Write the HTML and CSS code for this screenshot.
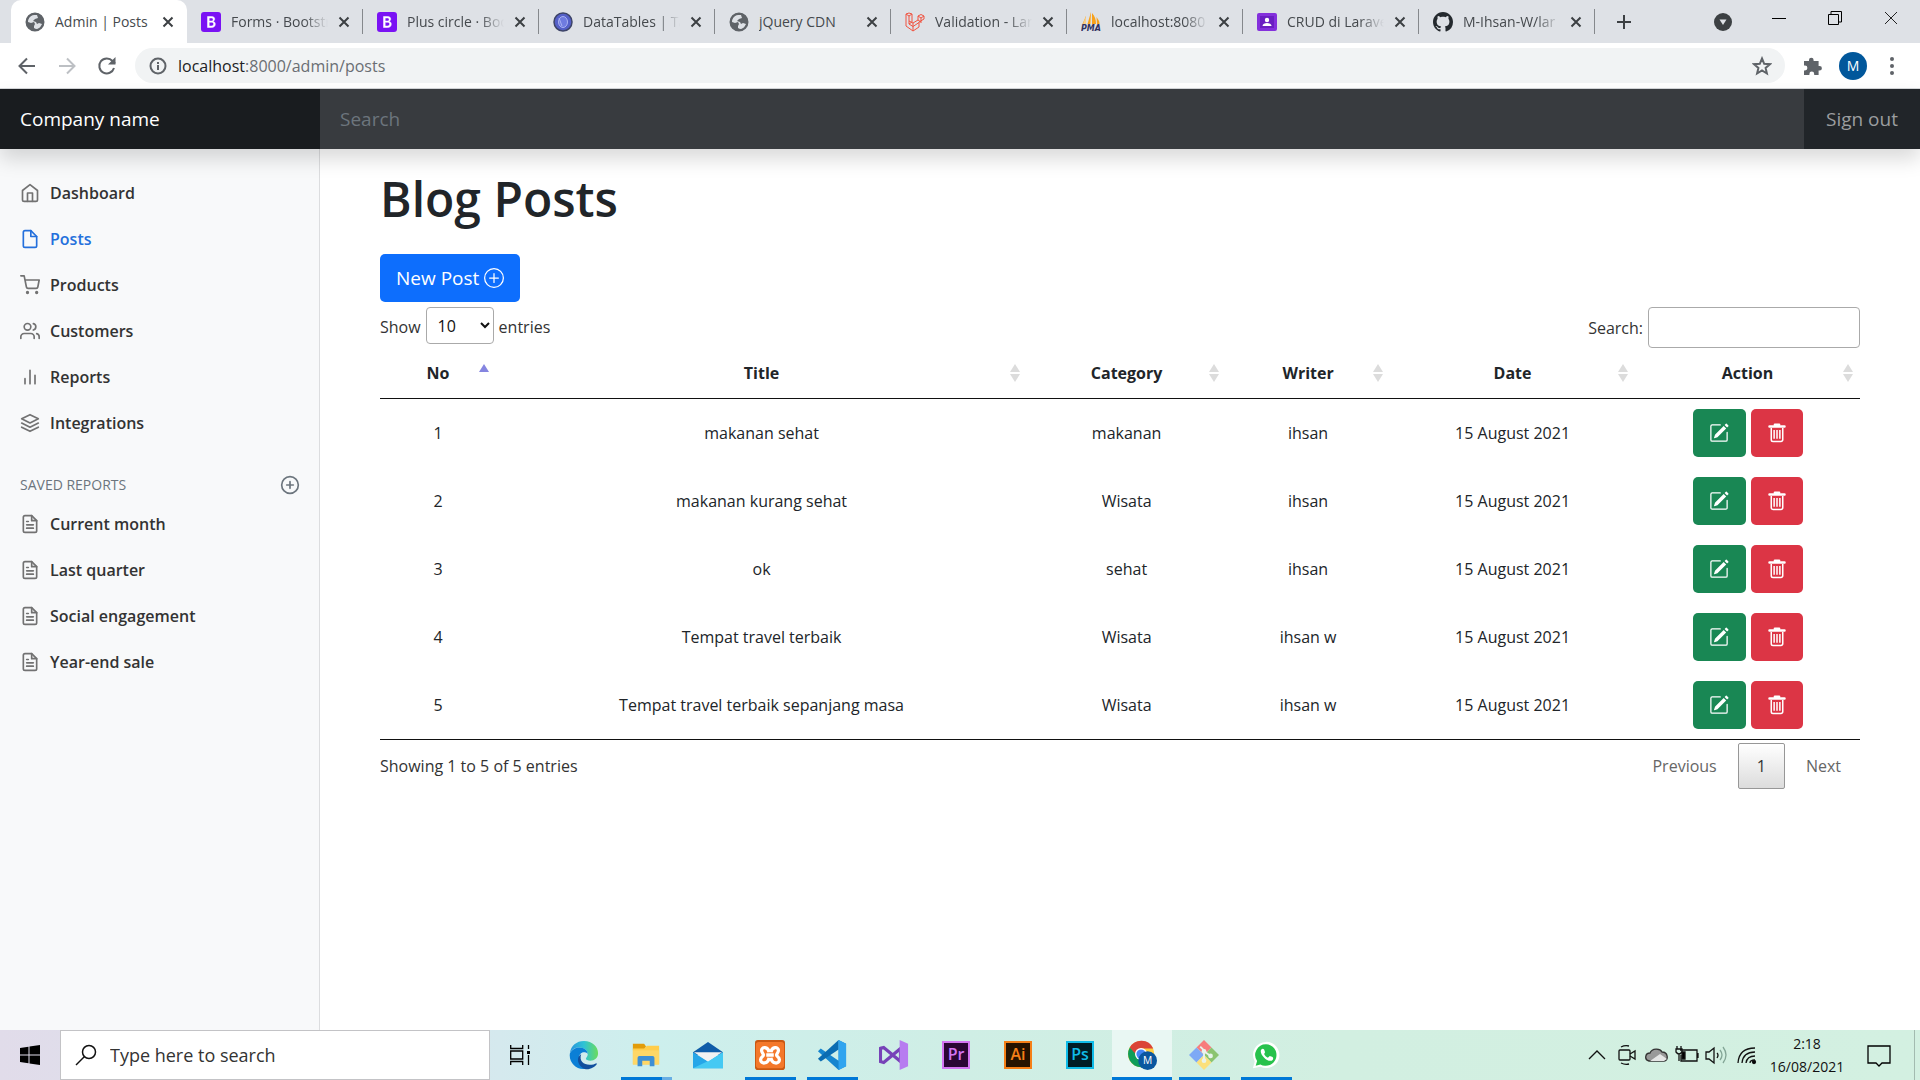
FILE: index.html
```html
<!DOCTYPE html>
<html lang="en">
<head>
<meta charset="utf-8">
<meta name="viewport" content="width=device-width, initial-scale=1">
<title>Admin | Posts</title>
<link rel="stylesheet" href="styles.css">
</head>
<body>
<svg class="sprite" aria-hidden="true">
  <symbol id="globe" viewBox="0 0 20 20"><circle cx="10" cy="10" r="9" fill="#5f6368"/><path d="M9 3c-3 0-6 3-6 7l3 1 3-1 1 2-1 2v2l2 1c3 0 5-2 6-5l-3-1-2 1-1-2-3-1 2-2 3-1-1-3z" fill="#dee1e6"/><path d="M10 1.500a8.500 8.500 0 1 0 0 17a8.500 8.500 0 1 0 0-17" fill="none" stroke="#5f6368" stroke-width="2"/></symbol>
  <symbol id="boot" viewBox="0 0 20 20"><rect width="20" height="20" rx="3" fill="#7a12f4"/><path d="M6.500 4.500h4.200c1.900 0 3 .9 3 2.500 0 1.200-.7 2.100-1.800 2.400 1.500.2 2.400 1.200 2.400 2.700 0 2.100-1.400 3.400-3.700 3.400H6.500zM8.200 6v3h2c1.200 0 1.900-.5 1.900-1.500S11.500 6 10.400 6zm0 4.300V14h2.300c1.300 0 2.100-.6 2.100-1.900 0-1.200-.8-1.800-2.200-1.800z" fill="#fff" stroke="#fff" stroke-width=".5"/></symbol>
  <symbol id="x" viewBox="0 0 12 12"><path d="M1.500 1.500l9 9M10.500 1.500l-9 9" stroke="#3c4043" stroke-width="2" fill="none"/></symbol>
  <symbol id="file" viewBox="0 0 24 24"><path d="M13 2H6a2 2 0 0 0-2 2v16a2 2 0 0 0 2 2h12a2 2 0 0 0 2-2V9z"/><path d="M13 2v7h7"/></symbol>
  <symbol id="filetext" viewBox="0 0 24 24"><path d="M14 2H6a2 2 0 0 0-2 2v16a2 2 0 0 0 2 2h12a2 2 0 0 0 2-2V8z"/><path d="M14 2v6h6M16 13H8M16 17H8M10 9H8"/></symbol>
  <symbol id="pluscircle" viewBox="0 0 24 24"><circle cx="12" cy="12" r="10"/><path d="M12 8v8M8 12h8"/></symbol>
  <symbol id="sort" viewBox="0 0 10 18"><path d="M5 0l5 8H0zM5 18l5-8H0z" fill="#dcdcdc"/></symbol>
  <symbol id="edit" viewBox="0 0 16 16"><path fill="#fff" d="M15.502 1.940a.5.5 0 0 1 0 .706L14.459 3.690l-2-2L13.502.646a.5.5 0 0 1 .707 0l1.293 1.293zm-1.750 2.456-2-2L4.939 9.210a.5.5 0 0 0-.121.196l-.805 2.414a.25.25 0 0 0 .316.316l2.414-.805a.5.5 0 0 0 .196-.120l6.813-6.814z"/><path fill="#fff" fill-rule="evenodd" d="M1 13.500A1.500 1.500 0 0 0 2.500 15h11a1.500 1.500 0 0 0 1.500-1.500v-6a.5.5 0 0 0-1 0v6a.5.5 0 0 1-.5.5h-11a.5.5 0 0 1-.5-.5v-11a.5.5 0 0 1 .5-.5H9a.5.5 0 0 0 0-1H2.500A1.500 1.500 0 0 0 1 2.500v11z"/></symbol>
  <symbol id="trash" viewBox="0 0 16 16"><path d="M2 2.800h12M6.300 1.400h3.400" stroke="#fff" stroke-width="2" stroke-linecap="round" fill="none"/><path d="M3.400 4v9.300a1.400 1.400 0 0 0 1.400 1.400h6.400a1.400 1.400 0 0 0 1.400-1.400V4M5.700 5.500v7M8 5.500v7M10.300 5.500v7" stroke="#fff" stroke-width="1.200" fill="none"/></symbol>
</svg>

<header class="browser">
  <div class="tabstrip">
    <nav class="tabs" aria-label="Tabs">
      <div class="tab active"><svg class="fav"><use href="#globe"/></svg><span class="name">Admin | Posts</span><button class="close" aria-label="Close tab"><svg><use href="#x"/></svg></button></div>
      <div class="tab"><svg class="fav"><use href="#boot"/></svg><span class="name">Forms · Bootstr</span><button class="close" aria-label="Close tab"><svg><use href="#x"/></svg></button></div>
      <div class="tab"><svg class="fav"><use href="#boot"/></svg><span class="name">Plus circle · Boo</span><button class="close" aria-label="Close tab"><svg><use href="#x"/></svg></button></div>
      <div class="tab"><svg class="fav" viewBox="0 0 20 20"><circle cx="10" cy="10" r="9" fill="#5560c8" stroke="#3d4468" stroke-width="1.500"/><ellipse cx="10" cy="10" rx="4.500" ry="5.500" fill="#6f7be0" stroke="#a9b2f2"/><path d="M6 6l3 8" stroke="#a9b2f2" fill="none"/></svg><span class="name">DataTables | Ta</span><button class="close" aria-label="Close tab"><svg><use href="#x"/></svg></button></div>
      <div class="tab"><svg class="fav"><use href="#globe"/></svg><span class="name full">jQuery CDN</span><button class="close" aria-label="Close tab"><svg><use href="#x"/></svg></button></div>
      <div class="tab"><svg class="fav" viewBox="0 0 20 20" fill="none" stroke="#f05340" stroke-linejoin="round"><path d="M1 2l3-1 3 1-3 2zM1 2v12l7 5 6-4v-5l5-3V4l-3-1.500L13 4v4l-5 3V19M7 2v8l-3 2V4M4 12l4 2.500 6-4M13 4l3 2 3-2M16 6v5M13 8l3 2M8 11L4 9"/></svg><span class="name">Validation - Lar</span><button class="close" aria-label="Close tab"><svg><use href="#x"/></svg></button></div>
      <div class="tab"><svg class="fav" viewBox="0 0 20 20"><path d="M5 4v8H1.500zM10 0v12H6.500zM11 1c3 3 4 7 4 11h-4zM15.500 5c2 3 3 4 3 7h-2.500z" fill="#f7a11b"/><path d="M5 4v8H2zM10 1v11H9z" fill="#f9cf8a"/><text x="0" y="19" class="pma">PMA</text></svg><span class="name">localhost:8080</span><button class="close" aria-label="Close tab"><svg><use href="#x"/></svg></button></div>
      <div class="tab"><svg class="fav" viewBox="0 0 20 20"><rect y="1" width="20" height="18" rx="2" fill="#8430dc"/><rect x="3" y="4" width="14" height="12" fill="#6a1fc2"/><circle cx="10" cy="8" r="2.200" fill="#fff"/><path d="M5.500 14c0-4 9-4 9 0z" fill="#fff"/></svg><span class="name">CRUD di Larave</span><button class="close" aria-label="Close tab"><svg><use href="#x"/></svg></button></div>
      <div class="tab"><svg class="fav" viewBox="0 0 16 16"><path fill="#24292e" d="M8 0C3.580 0 0 3.580 0 8c0 3.540 2.290 6.530 5.470 7.590.4.070.55-.17.55-.38 0-.19-.01-.82-.01-1.490-2.010.37-2.530-.49-2.690-.94-.09-.23-.48-.94-.82-1.130-.28-.15-.68-.52-.01-.53.63-.01 1.080.58 1.230.82.72 1.210 1.870.87 2.330.66.07-.52.28-.87.51-1.070-1.780-.2-3.640-.89-3.640-3.950 0-.87.31-1.590.82-2.150-.08-.2-.36-1.020.08-2.120 0 0 .67-.21 2.200.82.64-.18 1.320-.27 2-.27s1.360.09 2 .27c1.530-1.040 2.200-.82 2.200-.82.44 1.100.16 1.920.08 2.120.51.56.82 1.270.82 2.150 0 3.070-1.870 3.750-3.650 3.950.29.25.54.73.54 1.480 0 1.070-.01 1.930-.01 2.200 0 .21.15.46.55.38A8.010 8.010 0 0 0 16 8c0-4.420-3.580-8-8-8z"/></svg><span class="name">M-Ihsan-W/lar</span><button class="close" aria-label="Close tab"><svg><use href="#x"/></svg></button></div>
      <button class="newtab" aria-label="New tab"><svg width="16" height="16" viewBox="0 0 16 16"><path d="M8 1v14M1 8h14" stroke="#3c4043" stroke-width="2"/></svg></button>
    </nav>
    <div class="winbtns">
      <button class="search-tabs" aria-label="Search tabs"><svg width="18" height="18" viewBox="0 0 18 18"><circle cx="9" cy="9" r="9" fill="#3c4043"/><path d="M5.500 6.500h7L9 12z" fill="#dee1e6"/></svg></button>
      <button aria-label="Minimize"><svg width="14" height="14"><path d="M0 7.500h14" stroke="#000"/></svg></button>
      <button aria-label="Restore"><svg width="14" height="14" fill="none" stroke="#000"><path d="M.5 3.500h10v10H.5zM3 3V.5h10.500V11H11"/></svg></button>
      <button aria-label="Close"><svg width="14" height="14"><path d="M1 1l12 12M13 1L1 13" stroke="#222"/></svg></button>
    </div>
  </div>
  <div class="toolbar">
    <button class="nav-btn" aria-label="Back"><svg width="20" height="20" viewBox="0 0 20 20" fill="none" stroke="#5f6368" stroke-width="2"><path d="M18 10H3M10 2.500L2.500 10l7.500 7.500"/></svg></button>
    <button class="nav-btn" aria-label="Forward"><svg width="20" height="20" viewBox="0 0 20 20" fill="none" stroke="#bdc0c4" stroke-width="2"><path d="M2 10h15M10 2.500l7.500 7.500-7.500 7.500"/></svg></button>
    <button class="nav-btn" aria-label="Reload"><svg width="20" height="20" viewBox="0 0 20 20" fill="none" stroke="#5f6368" stroke-width="2"><path d="M17 12a7.500 7.500 0 1 1-1.500-7L18 7.500"/><path d="M18.500 1v7.500H11z" fill="#5f6368" stroke="none"/></svg></button>
    <div class="omnibox">
      <svg width="18" height="18" viewBox="0 0 18 18" fill="none" stroke="#5f6368" stroke-width="2"><circle cx="9" cy="9" r="7.500"/><path d="M9 8v5M9 5v2"/></svg>
      <p class="url"><b>localhost</b>:8000/admin/posts</p>
      <svg width="20" height="20" viewBox="0 0 20 20" fill="none" stroke="#5f6368" stroke-width="2"><path d="M10 2.500l2.200 5.300 5.700.4-4.300 3.700 1.300 5.600-4.900-3-4.900 3 1.300-5.600-4.300-3.700 5.700-.4z"/></svg>
    </div>
    <button class="tool-btn" aria-label="Extensions"><svg width="20" height="20" viewBox="0 0 20 20"><path d="M1 5h5V4a2.300 2.300 0 0 1 4.600 0v1h5v5h1a2.300 2.300 0 0 1 0 4.600h-1V19h-4.400v-1a2.400 2.400 0 0 0-4.800 0v1H1v-4.600h1a2.400 2.400 0 0 0 0-4.800H1z" fill="#5f6368"/></svg></button>
    <button class="avatar" aria-label="Profile">M</button>
    <button class="tool-btn" aria-label="Menu"><svg width="6" height="20"><circle cx="3" cy="3" r="2" fill="#5f6368"/><circle cx="3" cy="10" r="2" fill="#5f6368"/><circle cx="3" cy="17" r="2" fill="#5f6368"/></svg></button>
  </div>
</header>

<header class="navbar">
  <a class="brand" href="#">Company name</a>
  <input class="nav-search" type="text" placeholder="Search" aria-label="Search">
  <a class="signout" href="#">Sign out</a>
</header>

<div class="app">
  <nav class="sidebar" aria-label="Main">
    <ul>
      <li><a href="#"><svg class="ico" viewBox="0 0 24 24"><path d="M3 9l9-7 9 7v11a2 2 0 0 1-2 2H5a2 2 0 0 1-2-2z"/><path d="M9 22V12h6v10"/></svg>Dashboard</a></li>
      <li><a class="current" href="#"><svg class="ico"><use href="#file"/></svg>Posts</a></li>
      <li><a href="#"><svg class="ico" viewBox="0 0 24 24"><circle cx="9" cy="21" r="1"/><circle cx="20" cy="21" r="1"/><path d="M1 1h4l2.680 13.390a2 2 0 0 0 2 1.610h9.720a2 2 0 0 0 2-1.610L23 6H6"/></svg>Products</a></li>
      <li><a href="#"><svg class="ico" viewBox="0 0 24 24"><path d="M17 21v-2a4 4 0 0 0-4-4H5a4 4 0 0 0-4 4v2"/><circle cx="9" cy="7" r="4"/><path d="M23 21v-2a4 4 0 0 0-3-3.870M16 3.130a4 4 0 0 1 0 7.750"/></svg>Customers</a></li>
      <li><a href="#"><svg class="ico" viewBox="0 0 24 24"><path d="M18 20V10M12 20V4M6 20v-6"/></svg>Reports</a></li>
      <li><a href="#"><svg class="ico" viewBox="0 0 24 24"><path d="M12 2L2 7l10 5 10-5zM2 17l10 5 10-5M2 12l10 5 10-5"/></svg>Integrations</a></li>
    </ul>
    <h2 class="side-head"><span>SAVED REPORTS</span><a href="#" aria-label="Add a new report"><svg class="ico"><use href="#pluscircle"/></svg></a></h2>
    <ul>
      <li><a href="#"><svg class="ico"><use href="#filetext"/></svg>Current month</a></li>
      <li><a href="#"><svg class="ico"><use href="#filetext"/></svg>Last quarter</a></li>
      <li><a href="#"><svg class="ico"><use href="#filetext"/></svg>Social engagement</a></li>
      <li><a href="#"><svg class="ico"><use href="#filetext"/></svg>Year-end sale</a></li>
    </ul>
  </nav>

  <main class="content">
    <h1>Blog Posts</h1>
    <a class="btn-new" href="#">New Post <svg width="20" height="20" viewBox="0 0 16 16" fill="none" stroke="#fff"><circle cx="8" cy="8" r="7.500"/><path d="M8 4.500v7M4.500 8h7" stroke-linecap="round"/></svg></a>
    <div class="controls">
      <label class="length">Show <select><option>10</option><option>25</option><option>50</option></select> entries</label>
      <label class="filter">Search:<input type="search"></label>
    </div>
    <table>
      <colgroup><col class="c-no"><col class="c-title"><col class="c-cat"><col class="c-writer"><col class="c-date"><col class="c-action"></colgroup>
      <thead>
        <tr>
          <th>No<svg class="sort asc" viewBox="0 0 10 18"><path d="M5 0l5 8H0z" fill="#8585e0"/></svg></th>
          <th>Title<svg class="sort"><use href="#sort"/></svg></th>
          <th>Category<svg class="sort"><use href="#sort"/></svg></th>
          <th>Writer<svg class="sort"><use href="#sort"/></svg></th>
          <th>Date<svg class="sort"><use href="#sort"/></svg></th>
          <th>Action<svg class="sort"><use href="#sort"/></svg></th>
        </tr>
      </thead>
      <tbody>
        <tr><td>1</td><td>makanan sehat</td><td>makanan</td><td>ihsan</td><td>15 August 2021</td><td><div class="actions"><button class="edit" aria-label="Edit"><svg><use href="#edit"/></svg></button><button class="del" aria-label="Delete"><svg><use href="#trash"/></svg></button></div></td></tr>
        <tr><td>2</td><td>makanan kurang sehat</td><td>Wisata</td><td>ihsan</td><td>15 August 2021</td><td><div class="actions"><button class="edit" aria-label="Edit"><svg><use href="#edit"/></svg></button><button class="del" aria-label="Delete"><svg><use href="#trash"/></svg></button></div></td></tr>
        <tr><td>3</td><td>ok</td><td>sehat</td><td>ihsan</td><td>15 August 2021</td><td><div class="actions"><button class="edit" aria-label="Edit"><svg><use href="#edit"/></svg></button><button class="del" aria-label="Delete"><svg><use href="#trash"/></svg></button></div></td></tr>
        <tr><td>4</td><td>Tempat travel terbaik</td><td>Wisata</td><td>ihsan w</td><td>15 August 2021</td><td><div class="actions"><button class="edit" aria-label="Edit"><svg><use href="#edit"/></svg></button><button class="del" aria-label="Delete"><svg><use href="#trash"/></svg></button></div></td></tr>
        <tr><td>5</td><td>Tempat travel terbaik sepanjang masa</td><td>Wisata</td><td>ihsan w</td><td>15 August 2021</td><td><div class="actions"><button class="edit" aria-label="Edit"><svg><use href="#edit"/></svg></button><button class="del" aria-label="Delete"><svg><use href="#trash"/></svg></button></div></td></tr>
      </tbody>
    </table>
    <div class="table-foot">
      <p>Showing 1 to 5 of 5 entries</p>
      <nav class="pages" aria-label="Pages"><a href="#">Previous</a><a class="on" href="#">1</a><a href="#">Next</a></nav>
    </div>
  </main>
</div>

<footer class="taskbar">
  <button class="start" aria-label="Start"><svg width="20" height="20" viewBox="0 0 20 20"><path d="M0 3l8.500-1.200v7.700H0zM9.500 1.600L20 0v9.500H9.500zM0 10.500h8.500v7.700L0 17zM9.500 10.500H20V20L9.500 18.400z"/></svg></button>
  <div class="task-search"><svg width="22" height="22" viewBox="0 0 22 22" fill="none" stroke="#111" stroke-width="1.500"><circle cx="14" cy="8" r="6.500"/><path d="M9.500 12.500L1 21"/></svg><input type="text" placeholder="Type here to search" aria-label="Type here to search"></div>
  <button class="task view" aria-label="Task View"><svg width="20" height="20" viewBox="0 0 20 20" fill="none" stroke="#000" stroke-width="1.300"><path d="M.7 0v3.500h12V0M.7 20v-3.500h12V20M.7 6h12v8H.7zM18.500 0v4M18.500 10v10"/><path d="M17 6h3v3h-3z" fill="#000" stroke="none"/></svg></button>
  <div class="apps">
    <button class="task" aria-label="Edge"><svg viewBox="0 0 32 32"><defs><linearGradient id="e1" x1="0" x2="1"><stop offset="0" stop-color="#2793dd"/><stop offset=".5" stop-color="#2fc3d5"/><stop offset="1" stop-color="#6bdc5c"/></linearGradient></defs><path d="M1 14C2 6 8 1 16 1c9 0 15 6 15 13 0 5-4 8-8 8-3 0-5-1-5-2s2-2 2-5c0-4-4-7-9-7C6 8 3 10 1 14z" fill="url(#e1)"/><path d="M1 14c2-4 6-6 10-6 5 0 9 3 9 7-1-2-3-2-4-2-4 0-6 4-5 8 1 5 5 8 9 9-10 4-21-5-19-16z" fill="#0b7fd6"/><path d="M13 15c-3 9 5 13 13 11 2-1 3-1 4-1-2 4-8 7-13 6-6-2-11-11-4-16z" fill="#114f9e"/></svg></button>
    <button class="task open multi" aria-label="File Explorer"><svg viewBox="0 0 32 32"><path d="M2 4h12l2 3-2 4H2z" fill="#e29c0a"/><path d="M2 9h12l3-3h13v20H2z" fill="#ffcd4b"/><path d="M2 11h28v15H2z" fill="#ffd766"/><path d="M7 28V19q0-2 2-2h14q2 0 2 2v9h-5v-6h-8v6z" fill="#3e8fd4"/></svg></button>
    <button class="task" aria-label="Mail"><svg viewBox="0 0 32 32"><path d="M0 13L16 2l16 11v3H0z" fill="#0f5ca8"/><path d="M0 13v17h32V13L16 23z" fill="#26a6e8"/><path d="M0 30l19-9 13-8v17z" fill="#45c9f3"/><path d="M1 13h30L16 23z" fill="#f2f2f2"/></svg></button>
    <button class="task open" aria-label="XAMPP"><svg viewBox="0 0 32 32"><rect width="32" height="32" rx="3" fill="#c95812"/><rect x="1" y="2" width="30" height="28" rx="3" fill="#f4782a"/><path d="M15 13C14 7 7 7 7 11c0 3 2 3 2 5s-3 2-3 5c0 5 8 5 9-2M17 13c1-6 8-6 8-2 0 3-2 3-2 5s3 2 3 5c0 5-8 5-9-2M12 16h8" fill="none" stroke="#fff" stroke-width="3.500"/></svg></button>
    <button class="task open" aria-label="Visual Studio Code"><svg viewBox="0 0 32 32"><path d="M23 0l8 4v24l-8 4L1 12l3-3 19 13z" fill="#1685cf"/><path d="M23 0v10L4 23l-3-3z" fill="#0b6cb2"/><path d="M23 0l8 4v24l-8 4z" fill="#30a4ef"/></svg></button>
    <button class="task" aria-label="Visual Studio"><svg viewBox="0 0 32 32"><path d="M1.500 9L5 8l18 15V9L5 24l-3.500-1z" fill="none" stroke="#7742b8" stroke-width="3.500"/><path d="M22 0l9 4v24l-9 4z" fill="#b77cf0"/></svg></button>
    <button class="task" aria-label="Premiere Pro"><span class="adobe pr">Pr</span></button>
    <button class="task" aria-label="Illustrator"><span class="adobe ai">Ai</span></button>
    <button class="task" aria-label="Photoshop"><span class="adobe ps">Ps</span></button>
    <button class="task open focus" aria-label="Chrome"><svg viewBox="0 0 32 32"><circle cx="15" cy="15" r="14" fill="#ffcd40"/><path d="M3 8A14 14 0 0 1 28 9H15l-6 8z" fill="#db4437"/><path d="M3 8A14 14 0 0 0 15 29l6-11h-9z" fill="#0f9d58"/><circle cx="15" cy="15" r="6.500" fill="#fff"/><circle cx="15" cy="15" r="5" fill="#4285f4"/><circle cx="22" cy="22" r="10" fill="#0b579f"/><text x="22" y="26" class="badge">M</text></svg></button>
    <button class="task open" aria-label="Git"><svg viewBox="0 0 32 32"><path d="M16 0l8 8-8 8-8-8z" fill="#f87d7d"/><path d="M8 8l8 8-8 8-8-8z" fill="#7ea9f5"/><path d="M24 8l8 8-8 8-8-8z" fill="#8bc470"/><path d="M16 16l8 8-8 8-8-8z" fill="#fbe07c"/><path d="M12 7l4 4v12M16 12l7 5" stroke="#e8f3ec" stroke-width="2" fill="none"/><circle cx="16" cy="12" r="2.500" fill="#e8f3ec"/><circle cx="16" cy="22" r="2.500" fill="#e8f3ec"/><circle cx="23" cy="17" r="2.500" fill="#e8f3ec"/></svg></button>
    <button class="task open" aria-label="WhatsApp"><svg viewBox="0 0 32 32"><path d="M16 2a14 14 0 1 1-6 26.500L2 30l2-7A14 14 0 0 1 16 2z" fill="#fff"/><path d="M16 4.500a11.500 11.500 0 1 1-6 21.500l-5 1.500 1.500-5A11.500 11.500 0 0 1 16 4.500z" fill="#27c24c"/><path d="M11 10c-3 4 6 14 11 12 2-1 2-3 1-4l-3-1-2 2c-2-1-3-2-4-4l1-2-1-3c-1-1-2-1-3 0z" fill="#fff"/></svg></button>
  </div>
  <div class="tray">
    <svg viewBox="0 0 24 24"><path d="M4 16l8-8 8 8"/></svg>
    <svg viewBox="0 0 24 24"><rect x="4" y="7" width="11" height="10" rx="1"/><path d="M15 11l5-3v8l-5-3M6 4q4-2 8-1M6 20q4 2 8 1"/></svg>
    <svg viewBox="0 0 24 24"><path d="M4 18c-5-1-4-8 1-8 2-5 10-5 12-1 6 0 7 8 2 9z" fill="#999" stroke="#333"/><path d="M5 18l10-7 7 5-3 2z" fill="#e5e5e5" stroke="none"/></svg>
    <svg viewBox="0 0 24 24"><path d="M5 7h17v11H6v-6M23 10v5M1 6h6v3q-3 4-6 0zM2 3v3M6 3v3M4 11v7"/><path d="M7 9h3v7H7z" fill="#000"/></svg>
    <svg viewBox="0 0 24 24"><path d="M1 9h3l5-4v15l-5-4H1zM12 10q2 2 0 5"/><path d="M15 7q4 5 0 10M18 4q6 8 0 16" stroke="#83a596"/></svg>
    <svg viewBox="0 0 24 24"><path d="M3 20Q4 5 20 5M7 20Q8 9 20 9M11 20q1-7 9-7M15 20q0-3 5-3"/><circle cx="19" cy="19" r="1.500" fill="#000"/></svg>
  </div>
  <div class="clock"><span>2:18</span><span>16/08/2021</span></div>
  <button class="notif" aria-label="Notifications"><svg width="24" height="24" viewBox="0 0 24 24" fill="none" stroke="#000" stroke-width="1.300"><path d="M1 3h22v17h-8l-3 3-3-3H1z"/></svg></button>
  <button class="desktop" aria-label="Show desktop"></button>
</footer>
</body>
</html>
```
FILE: styles.css
```css
* { box-sizing: border-box; }
body {
  margin: 0;
  min-height: 100vh;
  display: flex;
  flex-direction: column;
  font: 16px/24px "Open Sans", "Noto Sans", sans-serif;
  color: #212529;
  background: #fff;
}
a { color: inherit; text-decoration: none; }
button { font: inherit; border: 0; background: none; padding: 0; margin: 0; color: inherit; }
p, h1, h2, ul { margin: 0; padding: 0; }
ul { list-style: none; }
svg { display: block; flex: none; }
.sprite { position: absolute; width: 0; height: 0; }

/* browser frame */
.tabstrip { display: flex; height: 43px; background: #dee1e6; }
.tabs { display: flex; flex: 1; padding-left: 11px; min-width: 0; }
.tab {
  display: flex;
  align-items: center;
  flex: 0 1 176px;
  min-width: 0;
  height: 43px;
  padding: 0 13px 0 14px;
  gap: 10px;
  font-size: 14px;
  line-height: 20px;
  color: #45494d;
  background: linear-gradient(#85888c, #85888c) right center / 1px 25px no-repeat;
}
.tab.active { background: #fff; border-radius: 10px 10px 0 0; }
.fav { width: 20px; height: 20px; }
.pma { font: italic bold 8px "DejaVu Sans", sans-serif; fill: #32325f; }
.name {
  flex: 1;
  min-width: 0;
  overflow: hidden;
  white-space: nowrap;
  -webkit-mask-image: linear-gradient(to right, #000 75%, transparent);
  mask-image: linear-gradient(to right, #000 75%, transparent);
}
.tab.active .name, .name.full { -webkit-mask-image: none; mask-image: none; }
.close svg { width: 12px; height: 12px; }
.newtab { padding: 0 21px; }
.winbtns { display: flex; height: 36px; padding-right: 1px; }
.winbtns button { width: 56px; display: grid; place-items: center; }
.winbtns .search-tabs { height: 43px; }
.toolbar {
  display: flex;
  align-items: center;
  height: 46px;
  padding: 0 18px 0 17px;
  border-bottom: 1px solid #d5d7da;
}
.nav-btn { width: 20px; margin-right: 20px; }
.omnibox {
  flex: 1;
  display: flex;
  align-items: center;
  gap: 11px;
  height: 35px;
  margin: 0 18px 0 -2px;
  padding: 0 13px 0 14px;
  border-radius: 18px;
  background: #f1f3f4;
}
.url { flex: 1; color: #6a6e73; }
.url b { font-weight: 400; color: #202124; }
.tool-btn { min-width: 20px; display: grid; place-items: center; }
.avatar {
  width: 28px;
  height: 28px;
  margin: 0 15px 0 16px;
  border-radius: 50%;
  background: #01579b;
  color: #fff;
  font-size: 14px;
}

/* site header */
.navbar {
  position: relative;
  z-index: 1;
  display: flex;
  height: 60px;
  font-size: 19px;
  line-height: 60px;
  background: #212529;
  box-shadow: 0 10px 20px rgba(0, 0, 0, .15);
}
.brand { width: 320px; padding-left: 20px; color: #fff; background: #191c1f; }
.nav-search {
  flex: 1;
  min-width: 0;
  border: 0;
  padding: 0 20px;
  font: inherit;
  color: #fff;
  background: #383b3f;
}
.nav-search::placeholder { color: #6c757d; opacity: 1; }
.signout { width: 116px; text-align: center; color: #9b9d9f; }

.app { flex: 1; display: flex; }
.sidebar {
  width: 320px;
  padding-top: 21px;
  background: #f8f9fa;
  border-right: 1px solid #dcdddf;
  font-weight: 600;
}
.sidebar li a { display: flex; align-items: center; gap: 10px; height: 46px; padding: 0 20px; color: #333; }
.ico { width: 20px; height: 20px; fill: none; stroke: #727272; stroke-width: 2; stroke-linecap: round; stroke-linejoin: round; }
.sidebar li .current { color: #2470dc; }
.current .ico { stroke: #2470dc; }
.side-head {
  display: flex;
  align-items: center;
  justify-content: space-between;
  height: 20px;
  margin: 29px 19px 6px 20px;
  font-size: 14px;
  font-weight: 500;
  color: #6c757d;
}
.side-head .ico { stroke: #6c757d; }

/* posts table */
.content { flex: 1; min-width: 0; padding: 20px 60px; }
h1 { font-size: 48px; line-height: 60px; font-weight: 600; }
.btn-new {
  display: inline-flex;
  align-items: center;
  gap: 5px;
  height: 48px;
  margin-top: 25px;
  padding: 0 16px;
  border-radius: 5px;
  font-size: 19px;
  color: #fff;
  background: #0d6efd;
  vertical-align: top;
}
.controls { display: flex; justify-content: space-between; margin-top: 5px; color: #333; }
.length, .filter { display: flex; align-items: center; gap: 5px; }
.length { height: 40px; align-items: flex-start; line-height: 40px; }
select, .filter input { border: 1px solid #aaa; border-radius: 4px; background: #fff; font: inherit; color: #111; }
select { width: 68px; height: 37px; padding: 0 2px 0 7px; }
.filter input { width: 212px; height: 41px; padding: 5px; }
table { width: 100%; table-layout: fixed; border-collapse: separate; border-spacing: 0; border-bottom: 1px solid #111; }
.c-no { width: 7.84%; }
.c-title { width: 35.88%; }
.c-cat { width: 13.45%; }
.c-writer { width: 11.08%; }
.c-date { width: 16.55%; }
.c-action { width: 15.2%; }
th { position: relative; height: 51px; padding: 0; border-bottom: 1px solid #111; font-weight: 700; }
.sort { position: absolute; right: 7px; top: 16px; width: 10px; height: 18px; }
td { height: 68px; padding: 0; text-align: center; }
.actions { display: flex; justify-content: center; gap: 5px; }
.actions button { display: grid; place-items: center; width: 53px; height: 48px; border-radius: 5px; }
.actions .del { width: 52px; }
.actions svg { width: 20px; height: 20px; }
.edit { background: #198754; }
.del { background: #dc3545; }
.table-foot { display: flex; justify-content: space-between; padding-top: 3px; color: #333; }
.table-foot p { line-height: 46px; }
.pages { display: flex; gap: 2px; color: #666; }
.pages a { padding: 0 18px; border: 1px solid transparent; border-radius: 2px; line-height: 44px; }
.pages .on { color: #333; border-color: #979797; background: linear-gradient(#fff, #dcdcdc); }

/* desktop taskbar */
.taskbar {
  display: flex;
  height: 50px;
  background: linear-gradient(to right, #e1dcea 0, #dbe1ec 15%, #d5e9ee 26%, #cdefed 34%, #cfeee5 50%, #d2efe1 70%, #d3f0e1);
}
.start { width: 60px; display: grid; place-items: center; }
.task-search {
  display: flex;
  align-items: center;
  gap: 13px;
  width: 430px;
  padding-left: 14px;
  border: 1px solid #c3c3c6;
  background: #fff;
}
.task-search input { flex: 1; min-width: 0; border: 0; padding: 0; background: none; font: inherit; font-size: 18px; }
.task-search input::placeholder { color: #333; opacity: 1; }
.apps { display: flex; gap: 2px; margin-left: 4px; }
.task { display: grid; place-items: center; width: 60px; height: 50px; }
.apps svg { width: 30px; height: 30px; }
.open { background: linear-gradient(#0078d7, #0078d7) center bottom / 51px 3px no-repeat; }
.multi { background: linear-gradient(to right, #0078d7 80%, #68aee4 80%) center bottom / 51px 3px no-repeat; }
.focus { background: linear-gradient(#0078d7, #0078d7) center bottom / 100% 3px no-repeat, #e9f7f3; }
.adobe { width: 28px; height: 28px; border: 2px solid; font-size: 16px; line-height: 23px; font-weight: 600; }
.pr { color: #d375f2; background: #2a0634; }
.ai { color: #f57f17; background: #261300; }
.ps { color: #10bbe8; background: #001d26; }
.badge { font: 11px "Open Sans", sans-serif; fill: #fff; text-anchor: middle; }
.tray { display: flex; align-items: center; gap: 6px; margin-left: auto; }
.tray svg { width: 24px; height: 24px; fill: none; stroke: #111; stroke-width: 1.3; }
.clock { display: flex; flex-direction: column; justify-content: center; width: 96px; text-align: center; font-size: 14px; line-height: 23px; color: #111; }
.notif { display: grid; place-items: center; width: 48px; margin-right: 11px; }
.desktop { width: 6px; border-left: 1px solid #a3bbb0; }
```
